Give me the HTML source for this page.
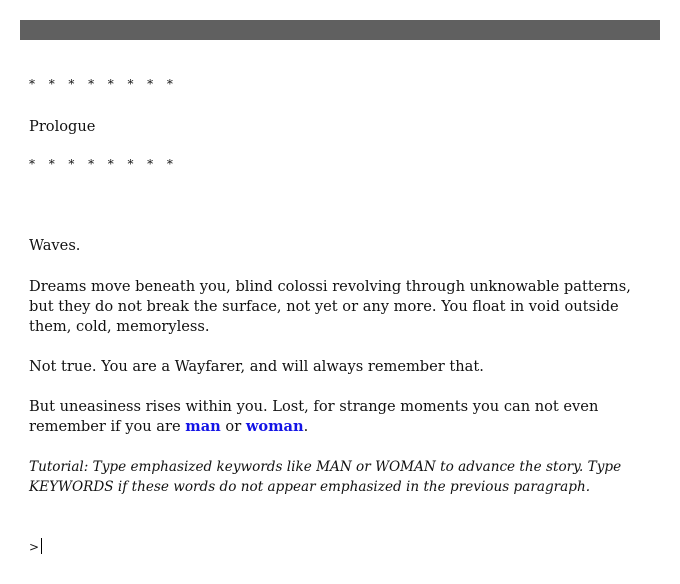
<!DOCTYPE html>
<html><head><style>
body{margin:0;background:#fff;width:680px;height:584px;overflow:hidden;font-family:"DejaVu Serif","Liberation Serif",serif;font-size:14.6px;color:#111;}
.bar{position:absolute;left:20px;top:20px;width:640px;height:20px;background:#606060;}
.t{position:absolute;left:29px;line-height:20px;white-space:nowrap;}
.s{font-size:12px;}
.s span{display:inline-block;width:19.7px}
b{color:#1414e6;}
</style></head><body>
<div class="bar"></div>
<div class="t s" style="top:74px"><span>*</span><span>*</span><span>*</span><span>*</span><span>*</span><span>*</span><span>*</span><span>*</span></div>
<div class="t" style="top:117px">Prologue</div>
<div class="t s" style="top:154px"><span>*</span><span>*</span><span>*</span><span>*</span><span>*</span><span>*</span><span>*</span><span>*</span></div>
<div class="t" style="top:236px">Waves.</div>
<div class="t" style="top:277px">Dreams move beneath you, blind colossi revolving through unknowable patterns,<br>but they do not break the surface, not yet or any more. You float in void outside<br>them, cold, memoryless.</div>
<div class="t" style="top:357px">Not true. You are a Wayfarer, and will always remember that.</div>
<div class="t" style="top:397px">But uneasiness rises within you. Lost, for strange moments you can not even<br>remember if you are <b>man</b> or <b>woman</b>.</div>
<div class="t" style="top:457px;font-style:italic;font-size:13.6px">Tutorial: Type emphasized keywords like MAN or WOMAN to advance the story. Type<br>KEYWORDS if these words do not appear emphasized in the previous paragraph.</div>
<div class="t" style="top:537px;font-size:12px">&gt;<span style="display:inline-block;width:1px;height:16px;background:#000;vertical-align:-3px;margin-left:2px"></span></div>
</body></html>
